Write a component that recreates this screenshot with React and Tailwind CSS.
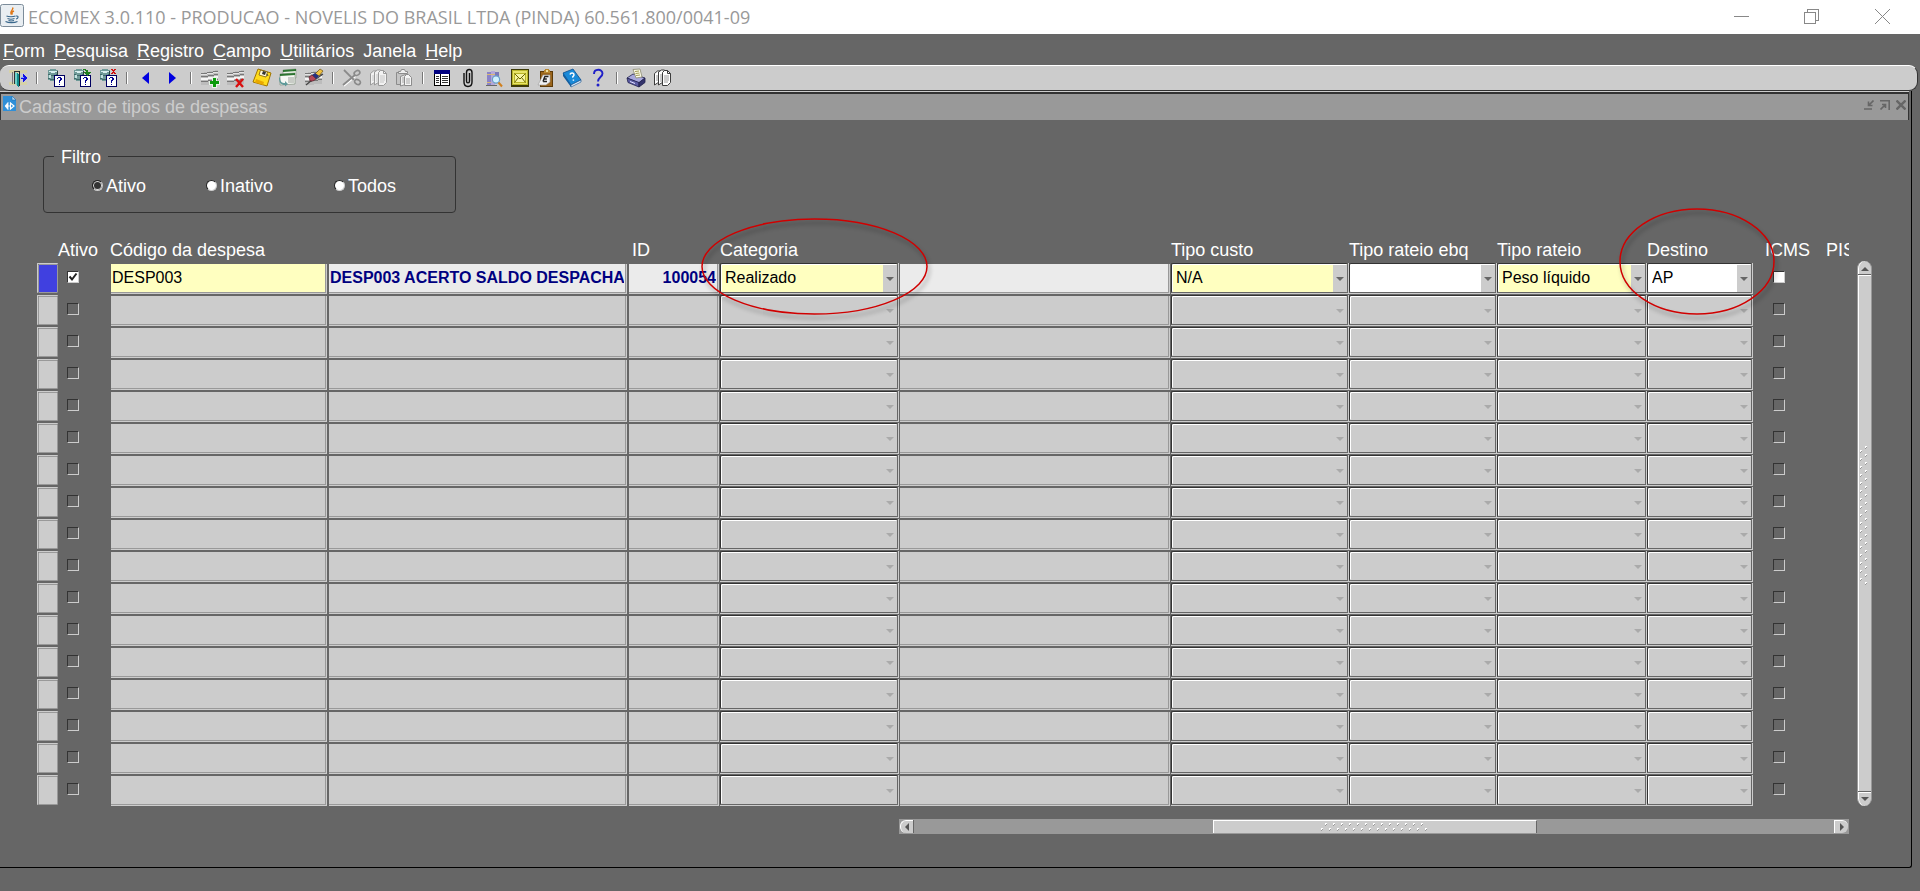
import React from "react";

/* ---------- toolbar drawings ---------- */

const Svg = ({ children, crisp = true }) => (
  <svg width="20" height="20" viewBox="0 0 20 20" shapeRendering={crisp ? "crispEdges" : "auto"} aria-hidden="true">
    {children}
  </svg>
);

const ExitIcon = () => (
  <Svg>
    <rect x="1" y="2" width="18" height="3" fill="#d6d2a8" />
    <rect x="1" y="14" width="18" height="3" fill="#d6d2a8" />
    <path d="M4 4h1v12H4z" fill="#777" />
    <path d="M6 3h6v1H7v12H6z" fill="#333" />
    <path d="M7 4l4 2v13l-4-3z" fill="#128c8c" />
    <path d="M7 4l2 1v12l-2-1z" fill="#6fd0c8" />
    <path d="M11 3h1v15h-1z" fill="#222" />
    <path d="M13 9h2V6h1v1h1v1h1v1h1v2h-1v1h-1v1h-1v1h-1v-3h-2z" fill="#1010e8" />
    <path d="M13 9h3v1h-3z" fill="#7fa4ff" />
  </Svg>
);

const DbBase = ({ children }) => (
  <Svg>
    <path d="M2 2h2V1h6v1h2v10h-2v1H4v-1H2z" fill="#6f9a98" />
    <path d="M3 3h8v1H9v1H5V4H3z" fill="#d7efee" />
    <path d="M2 6h2v1h6V6h2v1h-2v1H4V7H2zM2 10h2v1h4v1H4v-1H2z" fill="#3f6a6a" />
    <path d="M3 7h2v3H3z" fill="#c4e4e2" />
    <path d="M11 3h1v9h-1z" fill="#2c4444" />
    <rect x="8.5" y="7.5" width="10" height="11" fill="#fff" stroke="#000060" />
    <path d="M11 10h1V9h3v1h1v2h-1v1h-1v2h-1v-3h1v-2h-2v1h-1zM13 16h1v1h-1z" fill="#000090" />
    <path d="M15 10h1v2h-1z" fill="#000090" />
    {children}
  </Svg>
);
const DbGo = () => (
  <DbBase>
    <path d="M11 1h3v1h2v2h3l-3.500 4L12 4h2V3h-1V2h-2z" fill="#1f7d1f" />
  </DbBase>
);
const DbCancel = () => (
  <DbBase>
    <path d="M13 1h2v1h1V1h2v1h-1v1h-1v1h1v1h1v1h-2V5h-1v1h-2V5h1V4h1V3h-1V2h-1z" fill="#d01010" />
  </DbBase>
);

const PrevIcon = () => (
  <Svg crisp={false}>
    <path d="M6 10l7-6v12z" fill="#0000e0" />
  </Svg>
);
const NextIcon = () => (
  <Svg crisp={false}>
    <path d="M14 10L7 4v12z" fill="#0000e0" />
  </Svg>
);

const Sheet = () => (
  <>
    <path d="M1 5l17-3v14L1 17z" fill="#bcbcbc" />
    <path d="M1 7h6V6h6V5h5V3h-4v1H7v1H1z" fill="#e4e4e4" />
    <path d="M1 5.500h6M7 4.500h6M13 3.500h5M1 8.500h7M8 7.500h6M14 6.500h4M1 13.500h7M8 12.500h6M14 11.500h4" stroke="#777" fill="none" />
    <path d="M1 10h7V9h6V8h4v2h-4v1H8v1H1z" fill="#f4f4f4" />
  </>
);
const RowAdd = () => (
  <Svg>
    <Sheet />
    <path d="M12 9h5v4h3v4h-3v3h-5v-3H9v-4h3z" fill="#e8f4e8" />
    <path d="M13 10h3v3h3v3h-3v3h-3v-3h-3v-3h3z" fill="#0a9a0a" />
  </Svg>
);
const RowDelete = () => (
  <Svg>
    <Sheet />
    <path d="M10 11l7 8M17 11l-7 8" stroke="#d81010" strokeWidth="2.400" shapeRendering="auto" />
  </Svg>
);
const SaveIcon = () => (
  <Svg crisp={false}>
    <path d="M6 1l13 4-4 13-14-4z" fill="#ffdc1c" stroke="#a07400" />
    <path d="M8.500 2l7 2-1.500 5-7-2z" fill="#fff8dc" stroke="#7a5a00" strokeWidth=".8" />
    <path d="M11 3l3 1-1 3-3-1z" fill="#333" />
    <path d="M4 11l8 3-1 3-8-2.500z" fill="#e8a800" />
    <path d="M15 6l1 2" stroke="#444" />
  </Svg>
);
const GreenCards = () => (
  <Svg crisp={false}>
    <path d="M5 2l13-1v9l-13 1z" fill="#eef3ea" stroke="#8a9a86" strokeWidth=".7" />
    <path d="M5 2l13-1v2L5 4z" fill="#2c7430" />
    <path d="M2 6l15-1v11L2 17z" fill="#f6f8f4" stroke="#7f8f7c" strokeWidth=".7" />
    <path d="M2 6l15-1v2L2 8z" fill="#2c7430" />
    <path d="M10 10h6M10 12h6M10 14h6" stroke="#9a9f98" />
    <path d="M2 9c0 5 2 6 5 6v-2l3 3-3 2.500V17c-4 0-6-2-6-7z" fill="#5f9a9a" />
  </Svg>
);
const EraserIcon = () => (
  <Svg>
    <Sheet />
    <g shapeRendering="auto">
      <path d="M2 17L8 12M12 11l7-5" stroke="#444" strokeWidth="1.200" />
      <path d="M11 6l5-5 3 2-4 5z" fill="#f0c040" stroke="#6a5010" strokeWidth=".7" />
      <path d="M8 7l3-2 4 3-3 3z" fill="#26317e" />
      <path d="M5 9l3-2 4 4-3 2H6z" fill="#b4485a" stroke="#5c1c2a" strokeWidth=".7" />
    </g>
  </Svg>
);
const Scissors = () => (
  <Svg crisp={false}>
    <g fill="none" stroke="#fff" transform="translate(1 1)">
      <path d="M2 2l10 10M1 17L13 7" strokeWidth="1.500" />
    </g>
    <g fill="none" stroke="#8a8a8a">
      <path d="M2 2l10 10M1 17L13 7" strokeWidth="1.800" />
      <ellipse cx="15" cy="5" rx="3" ry="2.200" transform="rotate(-30 15 5)" strokeWidth="1.600" />
      <ellipse cx="15.500" cy="14" rx="3" ry="2.300" transform="rotate(30 15.500 14)" strokeWidth="1.600" />
    </g>
  </Svg>
);
const Pages = ({ line, fill }) => (
  <Svg crisp={false}>
    <path d="M2.500 5.500l3-2.500h4v12h-4l-3 2z" fill={fill} stroke={line} />
    <path d="M6.500 4l3-2h3v13h-3l-3 2z" fill={fill} stroke={line} />
    <path d="M10.500 4.500l2-2h3l3 3v9l-3 3h-5z" fill={fill} stroke={line} />
    <path d="M15.500 2.500v3h3" stroke={line} fill="none" />
    <path d="M4 8h2M4 10h2M4 12h2M8 7h2M8 9h2M8 11h2M8 13h2M12 8h5M12 10h5M12 12h5M12 14h4" stroke={line} opacity=".5" />
  </Svg>
);
const PasteIcon = () => (
  <Svg crisp={false}>
    <path d="M2.500 4.500h10v12h-10z" fill="#c4c4c4" stroke="#8c8c8c" />
    <path d="M4.500 5.500v-2h2l1-2h3l1 2h2v2z" fill="#eee" stroke="#8c8c8c" />
    <path d="M6.500 8.500l5-2v10l-5 1.500z" fill="#eee" stroke="#8c8c8c" />
    <path d="M10.500 8.500l2-2h2l3 3v8h-7z" fill="#f4f4f4" stroke="#8c8c8c" />
    <path d="M12 11h4M12 13h4M12 15h4M8 10h2M8 12h2M8 14h2" stroke="#a8a8a8" />
  </Svg>
);
const ListIcon = () => (
  <Svg>
    <rect x="2.500" y="2.500" width="15" height="15" fill="#fff" stroke="#000" />
    <rect x="2" y="2" width="16" height="4" fill="#000080" />
    <path d="M8.500 6v12" stroke="#000" />
    <path d="M4 8.500h3M4 10.500h3M4 12.500h3M4 14.500h3M10 8.500h6M10 10.500h6M10 12.500h6M10 14.500h6" stroke="#333" />
  </Svg>
);
const ClipIcon = () => (
  <Svg crisp={false}>
    <path
      d="M6 5v9c0 6 8 6 8 0V4.500c0-4-5.500-4-5.500 0V13c0 2.500 3 2.500 3 0V5"
      fill="none"
      stroke="#111"
      strokeWidth="1.400"
    />
  </Svg>
);
const BooksIcon = () => (
  <Svg>
    <path d="M3 4h4v13H3z" fill="#8a83c8" />
    <path d="M7 3h4v14H7z" fill="#b4a8d8" />
    <path d="M11 4h4v8h-4z" fill="#7a78b8" />
    <path d="M3 6.500h4M3 14.500h4M7 6.500h4" stroke="#d8b870" />
    <path d="M2 17.500h11" stroke="#666" />
    <g shapeRendering="auto">
      <circle cx="12" cy="11.500" r="3.600" fill="#d0f0ff" stroke="#6a9fc8" strokeWidth="1.200" />
      <path d="M14.500 14.500l3.500 4" stroke="#d08020" strokeWidth="2" />
    </g>
  </Svg>
);
const MailIcon = () => (
  <Svg>
    <rect x="1" y="1" width="18" height="18" fill="#3c3a08" />
    <rect x="2" y="2" width="16" height="15" fill="#b8b428" />
    <rect x="3" y="3" width="14" height="13" fill="#e8e468" />
    <g shapeRendering="auto" fill="none" stroke="#6a6600">
      <path d="M4.500 5.500h11v9h-11z" fill="#f6f4a0" stroke="#b8b428" />
      <path d="M4.500 5.500L10 11l5.500-5.500M4.500 14.500l4-5M15.500 14.500l-4-5" />
    </g>
  </Svg>
);
const ClipboardIcon = () => (
  <Svg>
    <rect x="4.500" y="3.500" width="12" height="15" fill="#9a651c" stroke="#5c3a08" />
    <path d="M8 2h1V1h4v1h1v3H8z" fill="#b88830" />
    <path d="M10 2h2v2h-2z" fill="#f0e0a0" />
    <g shapeRendering="auto">
      <path d="M7 7h7v7l-4 3H2z" fill="#f2f2f2" stroke="#999" strokeWidth=".6" />
      <path d="M8.500 8.500h4M7.800 11h3M7 13.500h4M8.800 8.500L7 13.500" stroke="#222" strokeWidth="1.400" />
    </g>
  </Svg>
);
const BookHelp = () => (
  <Svg crisp={false}>
    <path d="M1 5l10-4 8 11-10 5z" fill="#1a8ad8" stroke="#0c4c8c" strokeWidth=".8" />
    <path d="M1 5v3l8 11v-2z" fill="#0c5ca0" />
    <path d="M9 17l10-5v2L9 19z" fill="#e8f4ff" stroke="#0c4c8c" strokeWidth=".6" />
    <path d="M8 6.500c.5-2 4-2 4 .2 0 1.500-1.600 1.400-1.300 3M11.400 11.500v1.300" stroke="#fff" strokeWidth="1.500" fill="none" />
  </Svg>
);
const HelpIcon = () => (
  <Svg crisp={false}>
    <path d="M6 6c0-5.500 8.500-5.500 8.500-.5 0 3.500-4.500 3.500-4.500 8" stroke="#2020c8" strokeWidth="1.900" fill="none" />
    <circle cx="10" cy="17" r="1.500" fill="#2020c8" />
  </Svg>
);
const PrinterIcon = () => (
  <Svg crisp={false}>
    <path d="M1 10l6-4 12 4-6 5z" fill="#a8a8dc" stroke="#20204c" strokeWidth=".8" />
    <path d="M7 1.500L14 1l2 8-6 1z" fill="#fdfbe8" stroke="#8a8a70" strokeWidth=".8" />
    <path d="M9 3.500l4-.5M9.500 5.500l4-.5M10 7.500l4-.5" stroke="#a09a50" />
    <path d="M1 10l12 4.500V19L2 14.500z" fill="#5c5ca4" stroke="#20204c" strokeWidth=".8" />
    <path d="M13 14.500l6-4.500v4.500L13 19z" fill="#34346c" stroke="#20204c" strokeWidth=".8" />
    <path d="M4 13.500l5 2" stroke="#e0e0ff" />
  </Svg>
);
const CopyOff = () => <Pages line="#9a9a9a" fill="#f2f2f2" />;
const CopyOn = () => <Pages line="#3c3c3c" fill="#fff" />;

const GROUPS = [
  [["Sair", ExitIcon]],
  [["Entrar consulta", DbBase], ["Executar consulta", DbGo], ["Cancelar consulta", DbCancel]],
  [["Anterior", PrevIcon], ["Próximo", NextIcon]],
  [["Inserir", RowAdd], ["Remover", RowDelete], ["Salvar", SaveIcon], ["Duplicar", GreenCards], ["Limpar", EraserIcon]],
  [["Recortar", Scissors], ["Copiar", CopyOff], ["Colar", PasteIcon]],
  [
    ["Lista", ListIcon], ["Anexo", ClipIcon], ["Pesquisar", BooksIcon], ["Correio", MailIcon],
    ["Editor", ClipboardIcon], ["Manual", BookHelp], ["Ajuda", HelpIcon],
  ],
  [["Imprimir", PrinterIcon], ["Visualizar", CopyOn]],
];

const MENUS = ["Form", "Pesquisa", "Registro", "Campo", "Utilitários", "Janela", "Help"];

/* ---------- form controls ---------- */

function TextCell({ label, value, tone, className = "" }) {
  return (
    <td className="p-0 pt-px pb-px align-top">
      <div className="mr-px ml-px h-[30px] border-r border-b border-[#ccc]">
        <input
          aria-label={label}
          defaultValue={value}
          disabled={tone === "empty"}
          className={
            "block h-full w-full rounded-none border-r border-b border-[#999] px-px text-[16px] outline-none " +
            (tone === "edit" ? "bg-[#ffffc0] text-black " : tone === "view" ? "bg-[#ebebeb] font-bold text-[#000080] " : "bg-[#ccc] ") +
            className
          }
        />
      </div>
    </td>
  );
}

function SelectCell({ label, value, tone }) {
  const empty = tone === "empty";
  return (
    <td className="p-0 align-top">
      <div className="relative h-[31px] border-r border-b border-[#ccc]">
        <select
          aria-label={label}
          disabled={empty}
          className={
            "block h-full w-full appearance-none rounded-[2px] border border-t-[#333] border-r-[#666] border-b-[#666] border-l-[#333] pl-1 text-[16px] opacity-100 shadow-[inset_1px_1px_0_#fff] outline-none " +
            (tone === "edit" ? "bg-[#ffffc0] text-black" : tone === "white" ? "bg-white text-black" : "bg-[#ccc]")
          }
        >
          <option>{value}</option>
        </select>
        <span
          className={
            "pointer-events-none absolute top-0.5 right-px bottom-px flex w-[14px] items-center justify-center bg-[#ccc] " +
            (empty ? "text-[#aaa]" : "text-[#666]")
          }
        >
          <svg width="8" height="4" viewBox="0 0 8 4" fill="currentColor" aria-hidden="true">
            <path d="M0 0h8L4 4z" />
          </svg>
        </span>
      </div>
    </td>
  );
}

function Tick({ label, checked, active, className = "" }) {
  return (
    <td className={"p-0 align-top " + className}>
      <span className="relative mt-2 block size-3">
        <input
          type="checkbox"
          aria-label={label}
          defaultChecked={checked}
          className={
            "block size-3 appearance-none border border-t-[#333] border-r-[#ccc] border-b-[#ccc] border-l-[#333] " +
            (active ? "bg-white" : "")
          }
        />
        {checked && (
          <svg className="pointer-events-none absolute inset-0" width="12" height="12" viewBox="0 0 12 12" aria-hidden="true">
            <path d="M2.500 5.500l2.500 3 4.500-6" fill="none" stroke="#222" strokeWidth="2" />
          </svg>
        )}
      </span>
    </td>
  );
}

function Radio({ label, checked, className = "" }) {
  return (
    <label className={"flex items-center gap-[3px] " + className}>
      <input
        type="radio"
        name="filtro"
        defaultChecked={checked}
        className="mb-0.5 size-[11px] appearance-none rounded-full border border-t-[#222] border-r-[#ccc] border-b-[#ccc] border-l-[#222] bg-white checked:bg-[#333] checked:shadow-[inset_0_0_0_1px_#ddd]"
      />
      <span>{label}</span>
    </label>
  );
}

function Ring({ width, height, className }) {
  return (
    <svg
      className={"pointer-events-none absolute z-10 max-w-none drop-shadow-[2px_4px_2px_rgba(0,0,0,0.35)] " + className}
      width={width}
      height={height}
      aria-hidden="true"
    >
      <ellipse cx={width / 2} cy={height / 2} rx={width / 2 - 1} ry={height / 2 - 1} fill="none" stroke="#d00000" strokeWidth="1.500" />
    </svg>
  );
}

const Dot = ({ x, y }) => (
  <>
    <path d={`M${x} ${y}h2v1h-1v1h-1z`} fill="#fff" />
    <path d={`M${x + 2} ${y + 1}v1h-1v1h-1v-1h1v-1z`} fill="#999" />
  </>
);

function HorizontalGrip() {
  return (
    <svg width="108" height="9" shapeRendering="crispEdges" aria-hidden="true">
      {Array.from({ length: 13 }, (_, i) => <Dot key={i} x={4 + i * 8} y={0} />)}
      {Array.from({ length: 14 }, (_, i) => <Dot key={i} x={i * 8} y={5} />)}
    </svg>
  );
}

function VerticalGrip() {
  return (
    <svg width="9" height="140" shapeRendering="crispEdges" aria-hidden="true">
      {Array.from({ length: 18 }, (_, i) => <Dot key={i} x={5} y={i * 8} />)}
      {Array.from({ length: 17 }, (_, i) => <Dot key={i} x={0} y={4 + i * 8} />)}
    </svg>
  );
}

/* ---------- page ---------- */

const ROWS = Array.from({ length: 17 }, (_, i) => i);

function ExpenseTable() {
  return (
    <table className="w-full table-fixed border-collapse text-left">
      <colgroup>
        <col className="w-[21px]" />
        <col className="w-[52px]" />
        <col className="w-[218px]" />
        <col className="w-[300px]" />
        <col className="w-[92px]" />
        <col className="w-[179px]" />
        <col />
        <col className="w-[178px]" />
        <col className="w-[148px]" />
        <col className="w-[150px]" />
        <col className="w-[106px]" />
        <col className="w-[73px]" />
        <col className="w-[23px]" />
      </colgroup>
      <thead>
        <tr className="h-6 align-top leading-[22px] whitespace-nowrap [&>th]:p-0 [&>th]:font-normal">
          <th />
          <th>Ativo</th>
          <th>Código da despesa</th>
          <th />
          <th><span className="pl-1">ID</span></th>
          <th className="relative">
            Categoria
            <Ring width={227} height={97} className="-top-[21px] -left-[19px]" />
          </th>
          <th />
          <th>Tipo custo</th>
          <th>Tipo rateio ebq</th>
          <th>Tipo rateio</th>
          <th className="relative">
            Destino
            <Ring width={156} height={107} className="-top-[31px] -left-[28px]" />
          </th>
          <th><span className="pl-3">ICMS</span></th>
          <th className="overflow-hidden">PIS</th>
        </tr>
      </thead>
      <tbody>
        {ROWS.map((i) => {
          const first = i === 0;
          const t = (tone) => (first ? tone : "empty");
          const v = (text) => (first ? text : "");
          return (
            <tr key={i} className="h-8">
              <td className="p-0 align-top">
                <div className="h-[30px] rounded-[1px] border-t border-l border-[#ccc]">
                  <button
                    type="button"
                    aria-label={`Registro ${i + 1}`}
                    className={"block h-full w-full rounded-[1px] border border-[#999] " + (first ? "bg-[#4040e0]" : "bg-[#ccc]")}
                  />
                </div>
              </td>
              <Tick label="Ativo" checked={first} active={first} className="pl-[9px]" />
              <TextCell label="Código da despesa" value={v("DESP003")} tone={t("edit")} />
              <TextCell label="Descrição" value={v("DESP003 ACERTO SALDO DESPACHA")} tone={t("view")} />
              <TextCell label="ID" value={v("100054")} tone={t("view")} className="text-right" />
              <SelectCell label="Categoria" value={v("Realizado")} tone={t("edit")} />
              <TextCell label="Descrição da categoria" value="" tone={t("view")} />
              <SelectCell label="Tipo custo" value={v("N/A")} tone={t("edit")} />
              <SelectCell label="Tipo rateio ebq" value="" tone={t("white")} />
              <SelectCell label="Tipo rateio" value={v("Peso líquido")} tone={t("edit")} />
              <SelectCell label="Destino" value={v("AP")} tone={t("white")} />
              <Tick label="ICMS" active={first} className="pl-5" />
              <td />
            </tr>
          );
        })}
      </tbody>
    </table>
  );
}

export default function App() {
  return (
    <div className="flex min-h-screen flex-col overflow-hidden bg-[#666] font-['Liberation_Sans',Arial,sans-serif] text-[18px] text-white">
      <header className="flex h-[34px] items-center bg-white pb-1">
        <svg className="mt-0.5" width="24" height="24" viewBox="0 0 24 24" aria-hidden="true">
          <rect x=".5" y=".5" width="23" height="22" rx="2" fill="#e9eef2" stroke="#7c8c9a" />
          <path d="M12.500 3.500c2 2-3.500 3.500-1 7M14 7c-2.500 1-2.500 2-1.500 3.500" fill="none" stroke="#e07818" strokeWidth="1.500" />
          <path d="M6.500 12c2 1 7 1 9 0M7.500 14.500c2 .8 5 .8 7 0M5.500 17.500c3 1.500 9 1.500 12 0M16 12c3-.5 2.500 2.500 0 3M8.500 16.500c1.500.5 4 .5 5.500 0" fill="none" stroke="#3a688c" strokeWidth="1.100" />
        </svg>
        <h1 className="mt-1 ml-1 font-['Open_Sans','Noto_Sans',sans-serif] text-[18px] whitespace-nowrap text-[#999]">
          ECOMEX 3.0.110 - PRODUCAO - NOVELIS DO BRASIL LTDA (PINDA) 60.561.800/0041-09
        </h1>
        <div className="mt-0.5 mr-0.5 ml-auto flex h-full items-center text-[#888]">
          <button type="button" aria-label="Minimizar" className="flex w-[70px] justify-center">
            <svg width="15" height="15" viewBox="0 0 15 15" shapeRendering="crispEdges"><path d="M0 7.500h15" stroke="currentColor" /></svg>
          </button>
          <button type="button" aria-label="Restaurar" className="flex w-[70px] justify-center">
            <svg width="15" height="15" viewBox="0 0 15 15" shapeRendering="crispEdges" fill="none" stroke="currentColor">
              <path d="M.5 3.500h11v11H.5zM3.500 3V.5h11v11H12" />
            </svg>
          </button>
          <button type="button" aria-label="Fechar" className="flex w-[72px] justify-center">
            <svg width="15" height="15" viewBox="0 0 15 15"><path d="M0 0l15 15M15 0L0 15" stroke="currentColor" /></svg>
          </button>
        </div>
      </header>

      <nav className="flex h-[31px] items-center gap-[9px] pt-0.5 pl-[3px]">
        {MENUS.map((m) => (
          <button key={m} type="button" className="leading-6">
            {m === "Janela" ? m : (
              <>
                <span className="underline decoration-1 underline-offset-2">{m[0]}</span>
                {m.slice(1)}
              </>
            )}
          </button>
        ))}
      </nav>

      <div className="mr-0.5 flex h-[26px] items-center rounded-[9px] border-t border-r border-b border-t-white border-r-[#333] border-b-[#333] bg-[#ccc] pl-[5px]">
        {GROUPS.map((group, g) => (
          <React.Fragment key={g}>
            {g > 0 && (
              <span className="flex w-3 justify-center">
                <span className="h-3 w-0.5 border-l border-[#777] bg-white" />
              </span>
            )}
            {group.map(([name, Icon]) => (
              <button key={name} type="button" aria-label={name} className="flex w-[26px] justify-center">
                <Icon />
              </button>
            ))}
          </React.Fragment>
        ))}
      </div>

      <main className="mr-2 rounded-br-[3px] border-r border-b border-black">
        <div className="mr-0.5 border-t border-[#ccc]">
          <div className="flex h-7 border-t-2 border-r border-l border-[#333] bg-[#999]">
            <svg className="mt-0.5 ml-0.5" width="13" height="15" viewBox="0 0 13 15" aria-hidden="true">
              <path d="M0 0h9l4 4v11H0z" fill="#2f8fd8" />
              <path d="M9 0v4h4z" fill="#b8dcf6" stroke="#1a6cb0" strokeWidth=".6" />
              <path d="M5 6.500v7L2 10zM5 10h2" fill="#fff" stroke="#fff" strokeWidth=".8" />
              <path d="M7.500 7v6L11 10z" fill="none" stroke="#fff" strokeWidth="1.200" />
            </svg>
            <h2 className="ml-[3px] leading-[26px] text-[#ccc]">Cadastro de tipos de despesas</h2>
            <div className="mt-[6px] mr-0.5 ml-auto flex gap-[6px] text-[#666]">
              <button type="button" aria-label="Minimizar janela" className="size-[10px]">
                <svg width="10" height="10" viewBox="0 0 10 10"><path d="M0 9h8M9.500.5L5 5M4.500 1.500v4h4" fill="none" stroke="currentColor" strokeWidth="1.600" /></svg>
              </button>
              <button type="button" aria-label="Maximizar janela" className="size-[10px]">
                <svg width="10" height="10" viewBox="0 0 10 10"><path d="M0 .8h9.200V10M.5 9.500L5 5M2 4.500h3.500V8" fill="none" stroke="currentColor" strokeWidth="1.600" /></svg>
              </button>
              <button type="button" aria-label="Fechar janela" className="size-[10px]">
                <svg width="10" height="10" viewBox="0 0 10 10"><path d="M.5.5l9 9M9.500.5l-9 9" stroke="currentColor" strokeWidth="2.400" /></svg>
              </button>
            </div>
          </div>
        </div>

        <div className="pt-[25px] pr-[39px] pb-[33px] pl-[37px]">
          <fieldset className="ml-1.5 h-[68px] w-[413px] rounded-[4px] border border-[#333]">
            <legend className="ml-[10px] px-[7px] pt-0.5 leading-5">Filtro</legend>
            <div className="flex pt-[7px] pl-12 leading-6">
              <Radio label="Ativo" checked className="w-[114px]" />
              <Radio label="Inativo" className="w-[128px]" />
              <Radio label="Todos" />
            </div>
          </fieldset>

          <div className="mt-[26px] flex">
            <div className="min-w-0 flex-1">
              <ExpenseTable />
            </div>
            <div className="mt-[22px] ml-2 mb-px flex w-[15px] flex-col rounded-full border-r border-l border-r-[#999] border-l-[#999] bg-[#ccc] shadow-[inset_1px_0_0_#fff]">
              <button type="button" aria-label="Rolar para cima" className="flex h-[14px] items-center justify-center border-b border-[#666] pt-0.5">
                <svg width="8" height="4"><path d="M0 4h8L4 0z" fill="#555" /></svg>
              </button>
              <div className="flex flex-1 items-center justify-center border-t border-b border-t-white border-b-[#666] pb-9">
                <VerticalGrip />
              </div>
              <button type="button" aria-label="Rolar para baixo" className="flex h-[14px] items-center justify-center border-t border-white pb-0.5">
                <svg width="8" height="4"><path d="M0 0h8L4 4z" fill="#555" /></svg>
              </button>
            </div>
          </div>

          <div className="mt-3 mr-[23px] ml-[862px] flex h-[15px] bg-[#999] py-px">
            <button type="button" aria-label="Rolar para a esquerda" className="ml-px flex w-[13px] items-center justify-center rounded-l-md border-t border-l border-white bg-[#ccc] shadow-[1px_0_0_#666]">
              <svg width="4" height="8"><path d="M4 0v8L0 4z" fill="#555" /></svg>
            </button>
            <span className="grow-[300] basis-0" />
            <div className="flex grow-[323] basis-0 items-center justify-center border-t border-r border-l border-t-white border-r-[#666] border-l-white bg-[#ccc]">
              <HorizontalGrip />
            </div>
            <span className="grow-[297] basis-0" />
            <button type="button" aria-label="Rolar para a direita" className="mr-px flex w-[14px] items-center justify-center rounded-r-md border-t border-l border-white bg-[#ccc]">
              <svg width="4" height="8"><path d="M0 0v8l4-4z" fill="#555" /></svg>
            </button>
          </div>
        </div>
      </main>
    </div>
  );
}
